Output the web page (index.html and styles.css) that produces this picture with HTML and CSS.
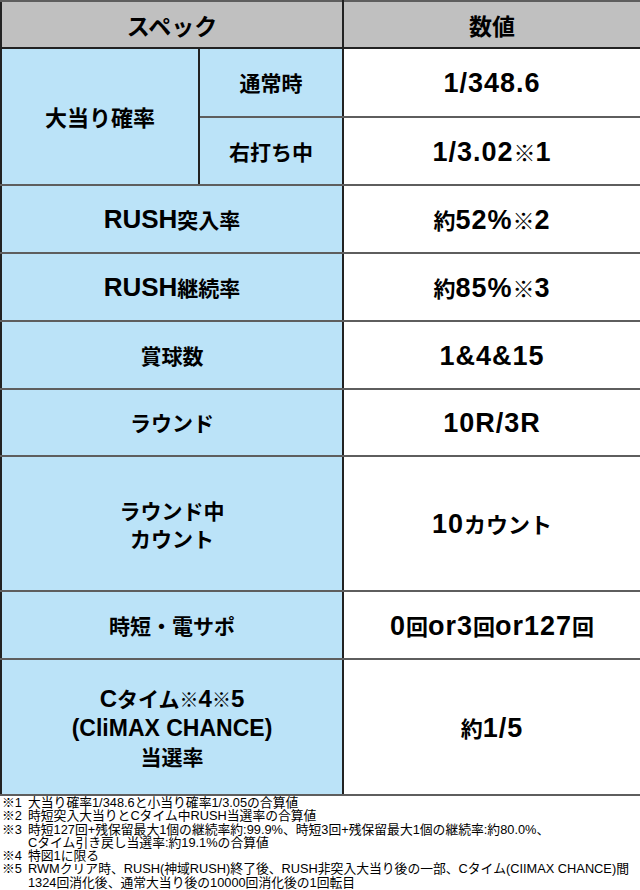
FILE: index.html
```html
<!DOCTYPE html>
<html lang="ja">
<head>
<meta charset="utf-8">
<link rel="stylesheet" href="styles.css">
</head>
<body>
<table class="spec">
  <colgroup><col class="c1"><col class="c2"><col class="c3"></colgroup>
  <thead>
    <tr class="r-head"><th colspan="2">スペック</th><th>数値</th></tr>
  </thead>
  <tbody>
    <tr class="r-a"><td class="lab big" rowspan="2">大当り確率</td><td class="lab">通常時</td><td class="val"><span class="en">1/348.6</span></td></tr>
    <tr class="r-b"><td class="lab">右打ち中</td><td class="val"><span class="en">1/3.02</span><span class="k">※</span><span class="en">1</span></td></tr>
    <tr class="r-c"><td class="lab" colspan="2"><span class="le">RUSH</span>突入率</td><td class="val">約<span class="en">52%</span><span class="k">※</span><span class="en">2</span></td></tr>
    <tr class="r-d"><td class="lab" colspan="2"><span class="le">RUSH</span>継続率</td><td class="val">約<span class="en">85%</span><span class="k">※</span><span class="en">3</span></td></tr>
    <tr class="r-e"><td class="lab" colspan="2">賞球数</td><td class="val"><span class="en">1&amp;4&amp;15</span></td></tr>
    <tr class="r-f"><td class="lab" colspan="2">ラウンド</td><td class="val"><span class="en">10R/3R</span></td></tr>
    <tr class="r-g"><td class="lab two" colspan="2">ラウンド中<br>カウント</td><td class="val"><span class="en">10</span>カウント</td></tr>
    <tr class="r-h"><td class="lab" colspan="2">時短・電サポ</td><td class="val"><span class="en">0</span>回<span class="en">or3</span>回<span class="en">or127</span>回</td></tr>
    <tr class="r-i"><td class="lab tall" colspan="2"><span class="ls">C</span>タイム<span class="k ks">※</span><span class="ls">4</span><span class="k ks">※</span><span class="ls">5</span><br><span class="lm">(CliMAX CHANCE)</span><br>当選率</td><td class="val">約<span class="en">1/5</span></td></tr>
  </tbody>
</table>
<ul class="notes">
  <li><span class="mk">※1</span><span class="tx">大当り確率1/348.6と小当り確率1/3.05の合算値</span></li>
  <li><span class="mk">※2</span><span class="tx">時短突入大当りとCタイム中RUSH当選率の合算値</span></li>
  <li><span class="mk">※3</span><span class="tx">時短127回+残保留最大1個の継続率約:99.9%、時短3回+残保留最大1個の継続率:約80.0%、<br>Cタイム引き戻し当選率:約19.1%の合算値</span></li>
  <li><span class="mk">※4</span><span class="tx">特図1に限る</span></li>
  <li><span class="mk">※5</span><span class="tx">RWMクリア時、RUSH(神域RUSH)終了後、RUSH非突入大当り後の一部、Cタイム(CIIMAX CHANCE)間<br>1324回消化後、通常大当り後の10000回消化後の1回転目</span></li>
</ul>
</body>
</html>
```
FILE: styles.css
```css
html, body {
  margin: 0;
  padding: 0;
  background: #ffffff;
}
body {
  width: 640px;
  height: 890px;
  overflow: hidden;
  font-family: "Noto Sans CJK JP", sans-serif;
  color: #000;
}
.spec {
  width: 640px;
  border-collapse: collapse;
  table-layout: fixed;
}
.c1 { width: 198px; }
.c2 { width: 144px; }
.c3 { width: 298px; }
.spec th, .spec td {
  border-top: 2px solid #5e5e5e;
  border-bottom: 2px solid #5e5e5e;
  border-left: 2px solid #222;
  border-right: 2px solid #222;
  padding: 0;
  text-align: center;
  vertical-align: middle;
  font-weight: 700;
}
.spec th {
  background: #c0c0c0;
  font-size: 23px;
  border-bottom-color: #222;
}
.lab {
  background: #bbe3f8;
  font-size: 21px;
  line-height: 27px;
}
.two {
  line-height: 28px;
}
.big {
  font-size: 22px;
}
.tall {
  line-height: 28px;
}
.val {
  background: #fff;
  font-size: 22px;
}
.en, .le, .ls, .lm {
  font-family: "Liberation Sans", Arial, sans-serif;
  font-weight: 700;
}
.en {
  font-size: 27px;
  letter-spacing: 1px;
}
.le {
  font-size: 26px;
}
.ls {
  font-size: 24px;
}
.lm {
  font-size: 23px;
}
.k {
  font-weight: 400;
}
.ks {
  font-size: 19px;
}
.r-head { height: 47px; }
.r-a { height: 69px; }
.r-b { height: 68px; }
.r-c { height: 68px; }
.r-d { height: 68px; }
.r-e { height: 68px; }
.r-f { height: 67px; }
.r-g { height: 135px; }
.r-h { height: 68px; }
.r-i { height: 136px; }
.notes {
  list-style: none;
  margin: 0;
  padding: 0 0 0 2px;
  font-family: "Liberation Sans", "Noto Sans CJK JP", sans-serif;
  font-size: 12.8px;
  line-height: 13.3px;
}
.notes li {
  display: flex;
}
.mk {
  flex: 0 0 26px;
}
.tx {
  white-space: nowrap;
}
```
